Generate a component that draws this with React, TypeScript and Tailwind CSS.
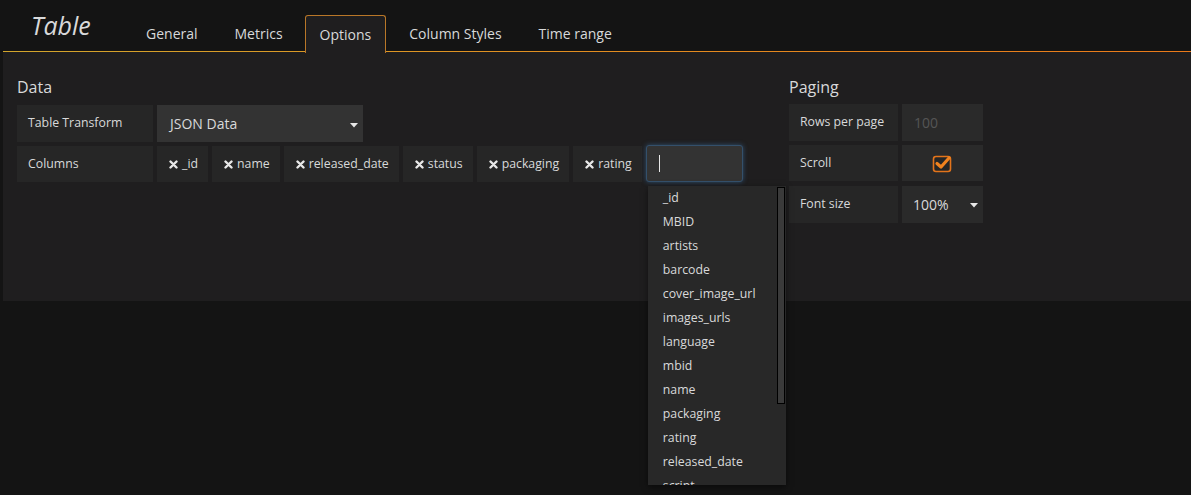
import React from "react";

const font = { fontFamily: '"Open Sans", "Noto Sans", sans-serif' };

function Caret() {
  return (
    <svg width="8" height="5" viewBox="0 0 8 5" className="shrink-0">
      <path d="M0 0 L8 0 L4 4.5 Z" fill="#e8e8e8" />
    </svg>
  );
}

function XIcon() {
  return (
    <svg width="9" height="9" viewBox="0 0 9 9" className="shrink-0">
      <path d="M1.5 1.5 L7.5 7.5 M7.5 1.5 L1.5 7.5" stroke="#e8e8e8" strokeWidth="2.4" strokeLinecap="round" />
    </svg>
  );
}

function Tag({ label }: { label: string }) {
  return (
    <div className="h-[36px] bg-[#262626] pl-[12px] pr-[10px] flex items-center gap-[4px] text-[12.3px] text-[#d8d9da]">
      <XIcon />
      <span>{label}</span>
    </div>
  );
}

const tabs = ["General", "Metrics", "Options", "Column Styles", "Time range"];
const items = [
  "_id",
  "MBID",
  "artists",
  "barcode",
  "cover_image_url",
  "images_urls",
  "language",
  "mbid",
  "name",
  "packaging",
  "rating",
  "released_date",
  "script",
];

export default function App() {
  return (
    <div className="w-[1191px] h-[495px] bg-[#141414] overflow-hidden" style={font}>
      {/* header */}
      <div className="relative h-[52px] flex items-end">
        <div className="absolute left-[3px] right-0 bottom-0 h-px bg-gradient-to-r from-[#d2a52c] via-[#e28d20] to-[#ea7a1a]" />
        <div className="self-start w-[131px] pl-[31px] pt-[6px] text-[25px] italic text-[#d8d9da] leading-[38px]">
          Table
        </div>
        <div className="flex items-end">
          {tabs.map((t) =>
            t === "Options" ? (
              <div
                key={t}
                className="relative z-10 h-[38px] px-[14px] mr-[8px] flex items-center text-[14px] text-[#d8d9da] bg-[#1f1e1f] border border-b-0 border-[#b97728] rounded-t-[3px] translate-y-px"
              >
                {t}
              </div>
            ) : (
              <div
                key={t}
                className="h-[38px] px-[15px] mr-[7px] flex items-center text-[14px] text-[#d8d9da]"
              >
                {t}
              </div>
            )
          )}
        </div>
      </div>

      {/* panel body */}
      <div className="ml-[3px] h-[249px] bg-[#1f1e1f] pl-[14px] pt-[25px] flex">
        {/* Data section */}
        <div className="w-[772px] shrink-0">
          <div className="text-[16px] leading-[20px] text-[#d8d9da] mb-[8px]">Data</div>
          <div className="flex flex-col gap-[4px]">
            <div className="flex gap-[4px] h-[37px]">
              <div className="w-[136px] bg-[#262626] pl-[11px] flex items-center text-[12.3px] text-[#d8d9da]">
                Table Transform
              </div>
              <div className="w-[206px] bg-[#333333] pl-[13px] pr-[5px] flex items-center justify-between text-[14px] text-[#d8d9da]">
                <span>JSON Data</span>
                <span className="mt-[3px]"><Caret /></span>
              </div>
            </div>
            <div className="flex gap-[4px] h-[36px]">
              <div className="w-[136px] bg-[#262626] pl-[11px] flex items-center text-[12.3px] text-[#d8d9da]">
                Columns
              </div>
              <Tag label="_id" />
              <Tag label="name" />
              <Tag label="released_date" />
              <Tag label="status" />
              <Tag label="packaging" />
              <Tag label="rating" />
              <div className="relative">
                <div className="w-[97px] h-[37px] -mt-px bg-[#333333] border border-[#34506b] rounded-[3px] shadow-[0_0_5px_rgba(60,120,180,0.55)] flex items-center pl-[12px]">
                  <div className="w-px h-[17px] bg-[#e8e8e8]" />
                </div>
                <div className="absolute left-[2px] top-[40px] z-20 w-[138px] h-[299px] overflow-hidden bg-[#282828] shadow-[0_2px_6px_rgba(0,0,0,0.5)]">
                  <div className="absolute right-[1px] top-[1px] w-[8px] h-[217px] bg-[#3a3a3a] border border-black" />
                  {items.map((it) => (
                    <div key={it} className="h-[24px] pl-[15px] flex items-center text-[12.3px] text-[#d8d9da]">
                      {it}
                    </div>
                  ))}
                </div>
              </div>
            </div>
          </div>
        </div>

        {/* Paging section */}
        <div>
          <div className="text-[16px] leading-[20px] text-[#d8d9da] mb-[7px]">Paging</div>
          <div className="flex flex-col gap-[4px]">
            <div className="flex gap-[4px] h-[37px]">
              <div className="w-[109px] bg-[#262626] pl-[11px] flex items-center text-[12.3px] text-[#d8d9da]">
                Rows per page
              </div>
              <div className="w-[81px] bg-[#2a2a2a] pl-[12px] flex items-center text-[14px] text-[#555555]">
                100
              </div>
            </div>
            <div className="flex gap-[4px] h-[36px]">
              <div className="w-[109px] bg-[#262626] pl-[11px] flex items-center text-[12.3px] text-[#d8d9da]">
                Scroll
              </div>
              <div className="w-[81px] bg-[#2a2a2a] flex items-center justify-center">
                <svg width="22" height="20" viewBox="0 0 22 20">
                  <rect x="1.5" y="3.5" width="17" height="15" rx="2.5" fill="#262626" stroke="#e3741b" strokeWidth="1.6" />
                  <path d="M5 10.5 L9 14 L17 5" fill="none" stroke="#f0821e" strokeWidth="3.2" strokeLinecap="round" strokeLinejoin="round" />
                </svg>
              </div>
            </div>
            <div className="flex gap-[4px] h-[37px] mt-[1px]">
              <div className="w-[109px] bg-[#262626] pl-[11px] flex items-center text-[12.3px] text-[#d8d9da]">
                Font size
              </div>
              <div className="w-[81px] bg-[#2a2a2a] pl-[11px] pr-[5px] flex items-center justify-between text-[14px] text-[#d8d9da]">
                <span>100%</span>
                <span className="mt-[2px]"><Caret /></span>
              </div>
            </div>
          </div>
        </div>
      </div>
    </div>
  );
}
